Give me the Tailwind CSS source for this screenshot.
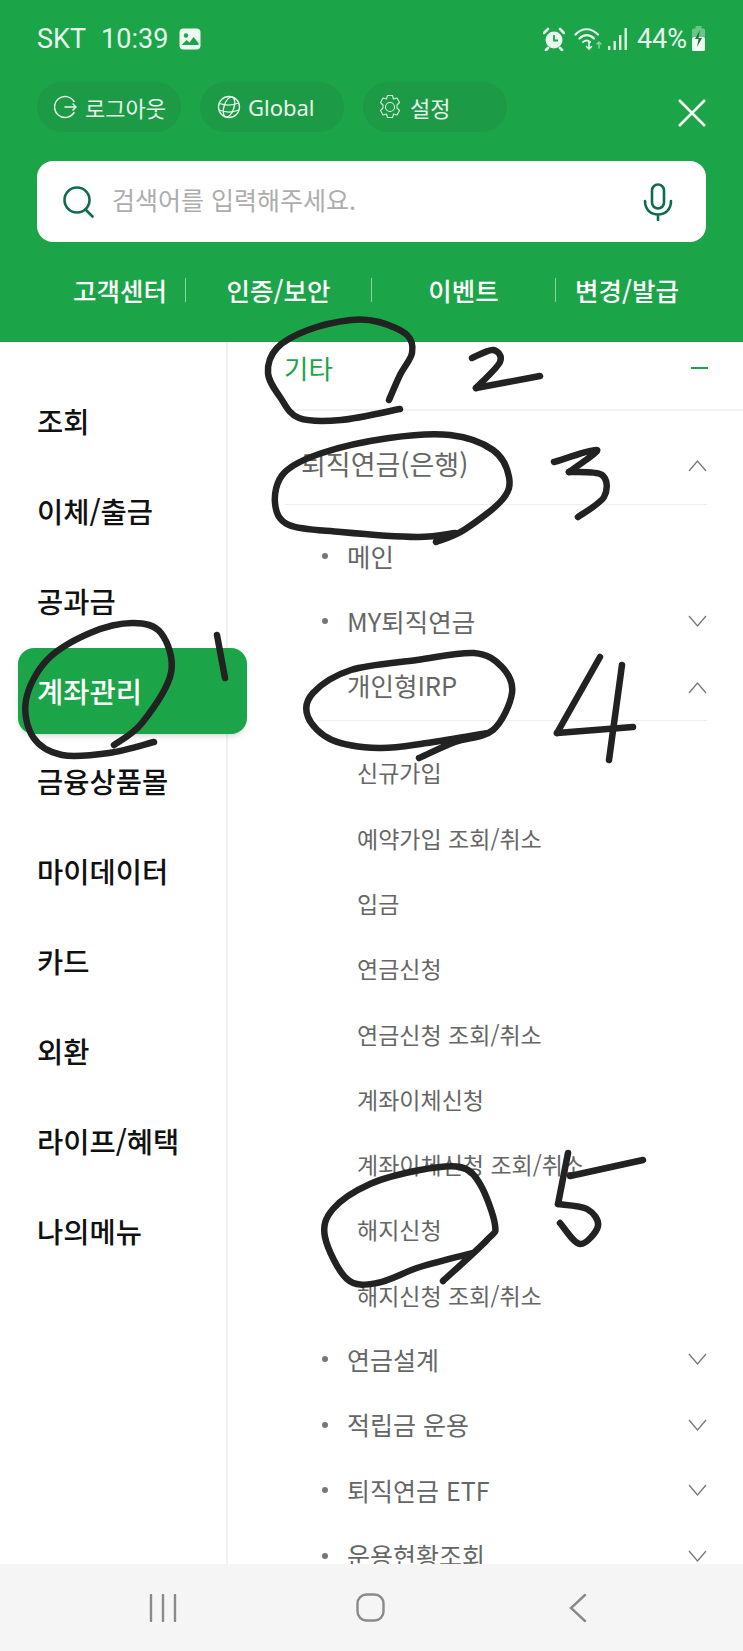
<!DOCTYPE html>
<html lang="ko">
<head>
    <meta charset="UTF-8">
    <meta name="viewport" content="width=device-width, initial-scale=1.0">
    <title>전체메뉴</title>
    <script src="https://cdn.jsdelivr.net/npm/@tailwindcss/browser@4"></script>
</head>
<body class="bg-white">
<div class="relative w-[743px] h-[1651px] overflow-hidden flex flex-col font-['Noto_Sans_CJK_KR','Noto_Sans',sans-serif]">

    <!-- green header -->
    <header class="h-[342px] shrink-0 bg-[#1ba548] text-white px-[37px]">
        <!-- status bar -->
        <div class="h-[78px] flex items-center justify-between font-['Roboto','Noto_Sans_CJK_KR',sans-serif] text-[27px] text-white/90">
            <div class="flex items-center">
                <span>SKT</span>
                <span class="ml-[15px]">10:39</span>
                <svg class="ml-[11px]" width="22" height="22" viewBox="0 0 22 22"><rect width="21" height="21" x="0.5" y="0.5" rx="4" fill="#eef8f0"/><circle cx="7" cy="7.5" r="2.2" fill="#1ba548"/><path d="M2.5 17l5-5 3 2.5 4-5.5 5 6v2h-17z" fill="#1ba548"/></svg>
            </div>
            <div class="flex items-center">
                <svg width="22" height="24" viewBox="0 0 22 24"><circle cx="11" cy="13" r="8.5" fill="#eaf7ee"/><path d="M11 8v5.5h4" fill="none" stroke="#1ba548" stroke-width="1.8"/><path d="M1 6l4-4M21 6l-4-4M5 21l-2 2M17 21l2 2" stroke="#eaf7ee" stroke-width="2.6" stroke-linecap="round"/></svg>
                <svg class="ml-[9px]" width="30" height="26" viewBox="0 0 30 26" fill="none" stroke="#eaf7ee" stroke-linecap="round"><path d="M1.5 8.5C8 1.5 17 1.500 24 8.500" stroke-width="2.200"/><path d="M5.500 12.500c4.500-4.500 10-4.500 14.500 0" stroke-width="2.200"/><path d="M9 16c2.500-2 5-2 7 0" stroke-width="2"/><path d="M15 16v7m-2.500-2.500l2.500 2.500 2.500-2.500" stroke-width="1.600"/><path d="M25 22v-6m-2 2l2-2 2 2" stroke="#8fd3a5" stroke-width="1.400"/></svg>
                <svg class="ml-[4px]" width="20" height="24" viewBox="0 0 20 24" fill="#dff3e5"><rect x="0" y="19" width="2.400" height="4"/><rect x="5.500" y="14" width="2.400" height="9"/><rect x="11" y="8" width="2.400" height="15"/><rect x="16.500" y="1" width="2.400" height="22"/></svg>
                <span class="ml-[9px]">44%</span>
                <svg class="ml-[4px]" width="15" height="26" viewBox="0 0 15 26"><rect x="4.500" y="0" width="6" height="3" fill="#6cc487"/><rect x="1" y="2.500" width="13" height="9" rx="1.500" fill="#6cc487"/><rect x="1" y="11" width="13" height="14" rx="1.500" fill="#f1faf3"/><path d="M9 4L4 13h3.500L6 21l5-9H7.500z" fill="#1a7a3a"/></svg>
            </div>
        </div>

        <!-- pills + close -->
        <div class="mt-[4px] h-[50px] flex items-center">
            <div class="w-[144px] h-[50px] rounded-full bg-[#1c9a45] flex items-center pl-[17px] text-[22px] text-white/90">
                <svg width="24" height="26" viewBox="0 0 24 26" fill="none" stroke="#eaf7ee" stroke-width="1.500" stroke-linecap="round" stroke-linejoin="round"><path d="M20 7.500A10.500 10.500 0 1 0 20 18.500"/><path d="M11 13h11m-3-3l3 3-3 3"/></svg>
                <span class="ml-[7px] whitespace-nowrap">로그아웃</span>
            </div>
            <div class="ml-[19px] w-[144px] h-[50px] rounded-full bg-[#1c9a45] flex items-center pl-[17px] text-[22px] text-white/90 font-['Noto_Sans',sans-serif]">
                <svg width="24" height="24" viewBox="0 0 24 24" fill="none" stroke="#eaf7ee" stroke-width="1.300"><circle cx="12" cy="12" r="10.500"/><ellipse cx="12" cy="12" rx="5" ry="10.500" transform="rotate(18 12 12)"/><path d="M2.500 8.500c6 2 13 2 19-.5M2 15c6 2.500 14 2.500 20 0"/></svg>
                <span class="ml-[7px]">Global</span>
            </div>
            <div class="ml-[19px] w-[144px] h-[50px] rounded-full bg-[#1c9a45] flex items-center pl-[15px] text-[22px] text-white/90">
                <svg width="24" height="26" viewBox="0 0 24 26" fill="none" stroke="#d5efdc" stroke-width="1.100" stroke-linejoin="round"><path d="M9.500 1.500h5l1 3.500 3.500-1 2.500 4.500-2.500 2.500v3l2.500 2.500-2.500 4.500-3.500-1-1 3.500h-5l-1-3.500-3.500 1-2.500-4.500 2.500-2.500v-3L2.500 8.500 5 4l3.500 1z"/><circle cx="12" cy="13" r="4.500"/></svg>
                <span class="ml-[8px]">설정</span>
            </div>
            <svg class="ml-auto mt-[12px]" width="28" height="28" viewBox="0 0 28 28" stroke="#f4fbf6" stroke-width="2.600"><path d="M1 1l26 26M27 1L1 27"/></svg>
        </div>

        <!-- search -->
        <div class="mt-[29px] h-[81px] rounded-[16px] bg-white flex items-center pl-[25px] pr-[33px]">
            <svg width="33" height="33" viewBox="0 0 33 33" fill="none" stroke="#0e6b50" stroke-width="2.600" stroke-linecap="round"><circle cx="15" cy="15" r="12.500"/><path d="M23.500 24.500l7 7"/></svg>
            <span class="ml-[17px] -mt-[3px] text-[25px] text-[#adadad]">검색어를 입력해주세요.</span>
            <svg class="ml-auto" width="30" height="38" viewBox="0 0 30 38" fill="none" stroke="#0e6b50" stroke-width="2.600" stroke-linecap="round"><rect x="9" y="1.500" width="12" height="24" rx="6"/><path d="M2 18c0 9 6 13.500 13 13.500S28 27 28 18M15 32v5"/></svg>
        </div>

        <!-- quick links -->
        <div class="mt-[30px] h-[36px] flex items-center text-[25.5px] font-medium">
            <div class="w-[149px] h-[24px] flex items-center justify-center pl-[18px] border-r border-white/50"><span class="leading-none">고객센터</span></div>
            <div class="w-[186px] h-[24px] flex items-center justify-center border-r border-white/50"><span class="leading-none">인증/보안</span></div>
            <div class="w-[184px] h-[24px] flex items-center justify-center border-r border-white/50"><span class="leading-none">이벤트</span></div>
            <div class="flex-1 flex items-center justify-center pr-[8px]"><span class="leading-none">변경/발급</span></div>
        </div>
    </header>

    <!-- menu body -->
    <main class="flex-1 flex min-h-0">
        <nav class="w-[228px] shrink-0 border-r-2 border-[#f0f0f0] text-[28.5px] text-[#111] font-medium pt-[34px]">
            <div class="h-[90px] flex items-center pl-[37px]">조회</div>
            <div class="h-[90px] flex items-center pl-[37px]">이체/출금</div>
            <div class="h-[90px] flex items-center pl-[37px]">공과금</div>
            <div class="-mr-[21px] ml-[18px] h-[86px] my-[2px] flex items-center pl-[19px] rounded-[16px] bg-[#1ba548] text-white shadow-md relative">계좌관리</div>
            <div class="h-[90px] flex items-center pl-[37px]">금융상품몰</div>
            <div class="h-[90px] flex items-center pl-[37px]">마이데이터</div>
            <div class="h-[90px] flex items-center pl-[37px]">카드</div>
            <div class="h-[90px] flex items-center pl-[37px]">외환</div>
            <div class="h-[90px] flex items-center pl-[37px]">라이프/혜택</div>
            <div class="h-[90px] flex items-center pl-[37px]">나의메뉴</div>
        </nav>

        <section class="flex-1 min-w-0 overflow-hidden text-[#666] text-[25.5px]">
            <!-- 기타 -->
            <div class="h-[69px] ml-[56px] pr-[35px] pb-[16px] flex items-center justify-between border-b-2 border-[#f2f2f2] text-[#1ba548] text-[26.5px]">
                <span>기타</span>
                <span class="w-[17px] h-[2px] bg-[#1ba548]"></span>
            </div>
            <!-- 퇴직연금 -->
            <div class="h-[94px] ml-[57px] mr-[36px] pl-[16px] pt-[39px] flex items-start justify-between border-b border-[#eee] text-[27px]">
                <span class="leading-none">퇴직연금(은행)</span>
                <svg class="mt-[10px]" width="19" height="12" viewBox="0 0 19 12" fill="none" stroke="#777" stroke-width="1.300"><path d="M1 11L9.500 1 18 11"/></svg>
            </div>
            <div class="pl-[119px] pr-[36px]">
                <div class="h-[66px] mt-[18px] flex items-center relative">
                    <span class="absolute -left-[25px] w-[6px] h-[6px] rounded-full bg-[#777]"></span>메인
                </div>
                <div class="h-[64px] flex items-center justify-between relative">
                    <span class="absolute -left-[25px] w-[6px] h-[6px] rounded-full bg-[#777]"></span>MY퇴직연금
                    <svg width="19" height="12" viewBox="0 0 19 12" fill="none" stroke="#777" stroke-width="1.300"><path d="M1 1l8.500 10L18 1"/></svg>
                </div>
                <div class="h-[64px] flex items-center justify-between">
                    개인형IRP
                    <svg class="mt-[5px]" width="19" height="12" viewBox="0 0 19 12" fill="none" stroke="#777" stroke-width="1.300"><path d="M1 11L9.500 1 18 11"/></svg>
                </div>
                <div class="border-t border-[#eee] -ml-[30px] mb-[19px] mt-[3px]"></div>
            </div>
            <ul class="pl-[129px] text-[23px]">
                <li class="h-[65.3px] flex items-center">신규가입</li>
                <li class="h-[65.3px] flex items-center">예약가입 조회/취소</li>
                <li class="h-[65.3px] flex items-center">입금</li>
                <li class="h-[65.3px] flex items-center">연금신청</li>
                <li class="h-[65.3px] flex items-center">연금신청 조회/취소</li>
                <li class="h-[65.3px] flex items-center">계좌이체신청</li>
                <li class="h-[65.3px] flex items-center">계좌이체신청 조회/취소</li>
                <li class="h-[65.3px] flex items-center">해지신청</li>
                <li class="h-[65.3px] flex items-center">해지신청 조회/취소</li>
            </ul>
            <div class="-mt-[1px] pl-[119px] pr-[36px] text-[25px]">
                <div class="h-[65.5px] flex items-center justify-between relative">
                    <span class="absolute -left-[25px] w-[6px] h-[6px] rounded-full bg-[#777]"></span>연금설계
                    <svg width="19" height="12" viewBox="0 0 19 12" fill="none" stroke="#777" stroke-width="1.300"><path d="M1 1l8.500 10L18 1"/></svg>
                </div>
                <div class="h-[65.5px] flex items-center justify-between relative">
                    <span class="absolute -left-[25px] w-[6px] h-[6px] rounded-full bg-[#777]"></span>적립금 운용
                    <svg width="19" height="12" viewBox="0 0 19 12" fill="none" stroke="#777" stroke-width="1.300"><path d="M1 1l8.500 10L18 1"/></svg>
                </div>
                <div class="h-[65.5px] flex items-center justify-between relative">
                    <span class="absolute -left-[25px] w-[6px] h-[6px] rounded-full bg-[#777]"></span>퇴직연금 ETF
                    <svg width="19" height="12" viewBox="0 0 19 12" fill="none" stroke="#777" stroke-width="1.300"><path d="M1 1l8.500 10L18 1"/></svg>
                </div>
                <div class="h-[65.5px] flex items-center justify-between relative">
                    <span class="absolute -left-[25px] w-[6px] h-[6px] rounded-full bg-[#777]"></span>운용현황조회
                    <svg width="19" height="12" viewBox="0 0 19 12" fill="none" stroke="#777" stroke-width="1.300"><path d="M1 1l8.500 10L18 1"/></svg>
                </div>
            </div>
        </section>
    </main>

    <!-- android nav bar -->
    <footer class="relative z-10 h-[87px] shrink-0 bg-[#f5f5f5] flex items-center">
        <svg class="ml-[149px]" width="28" height="28" viewBox="0 0 28 28" stroke="#8a8a8a" stroke-width="2.400" stroke-linecap="round"><path d="M2 1v26M14 1v26M26 1v26"/></svg>
        <svg class="ml-[179px]" width="29" height="29" viewBox="0 0 29 29" fill="none" stroke="#8a8a8a" stroke-width="2.400"><rect x="1.500" y="1.500" width="26" height="26" rx="9"/></svg>
        <svg class="ml-[184px]" width="18" height="30" viewBox="0 0 18 30" fill="none" stroke="#8a8a8a" stroke-width="2.400" stroke-linecap="round"><path d="M16 2L2 15l14 13"/></svg>
    </footer>

    <!-- pen scribbles drawn over the screenshot -->
    <svg id="ink" class="absolute inset-0 pointer-events-none" width="743" height="1651" viewBox="0 0 743 1651" fill="none" stroke="#222" stroke-width="6.500" stroke-linecap="round" stroke-linejoin="round"></svg>
</div>

<script>
    // freehand marks, a curve through each point
    const strokes = [
        [[389,400],[400,375],[412,353],[407,335],[379,322],[351,320],[308,330],[277,348],[268,373],[280,397],[299,418],[341,420],[400,409]],
        [[472,358],[493,350],[500,362],[476,388]],
        [[476,388],[540,376]],
        [[436,542],[464,530],[502,500],[509,477],[493,450],[450,435],[389,438],[322,453],[284,473],[275,503],[289,525],[341,532],[417,537],[455,533]],
        [[554,462],[597,450],[569,472]],
        [[569,472],[602,475],[604,497],[578,517]],
        [[114,745],[142,723],[171,673],[161,633],[133,623],[90,633],[47,660],[26,700],[33,737],[62,755],[109,753],[154,742]],
        [[217,635],[225,678]],
        [[419,758],[455,742],[493,730],[512,693],[502,667],[474,653],[417,660],[351,670],[313,693],[308,717],[332,740],[379,748],[427,743],[488,733]],
        [[600,657],[557,733]],
        [[557,733],[633,727]],
        [[622,665],[609,760]],
        [[443,1281],[487,1240],[495,1225],[480,1184],[460,1167],[420,1170],[370,1184],[333,1209],[325,1237],[347,1279],[377,1283],[420,1267],[473,1253]],
        [[568,1153],[558,1204]],
        [[558,1204],[587,1209],[598,1226],[580,1244],[560,1223]],
        [[570,1176],[643,1160]]
    ];
    const ink = document.getElementById("ink");
    strokes.forEach(function(pts) {
        let d = "M" + pts[0].join(" ");
        for (let i = 0; i < pts.length - 1; i++) {
            const a = pts[i - 1] || pts[i], b = pts[i], c = pts[i + 1], e = pts[i + 2] || c;
            d += " C" + (b[0] + (c[0] - a[0]) / 6) + " " + (b[1] + (c[1] - a[1]) / 6)
               + " " + (c[0] - (e[0] - b[0]) / 6) + " " + (c[1] - (e[1] - b[1]) / 6)
               + " " + c[0] + " " + c[1];
        }
        const p = document.createElementNS("http://www.w3.org/2000/svg", "path");
        p.setAttribute("d", d);
        ink.appendChild(p);
    });
</script>
</body>
</html>
